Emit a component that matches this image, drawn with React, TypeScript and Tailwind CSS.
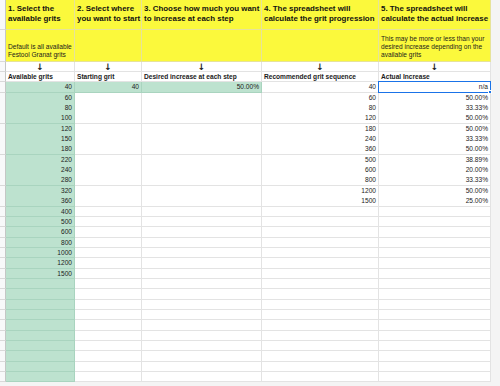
import React from "react";

const COLS = "grid grid-cols-[6px_69px_67px_120px_117px_112px_9px]";

const GRITS = [40, 60, 80, 100, 120, 150, 180, 220, 240, 280, 320, 360, 400, 500, 600, 800, 1000, 1200, 1500];
const SEQUENCE = [40, 60, 80, 120, 180, 240, 360, 500, 600, 800, 1200, 1500];
const ACTUAL = ["n/a", "50.00%", "33.33%", "50.00%", "50.00%", "33.33%", "50.00%", "38.89%", "20.00%", "33.33%", "50.00%", "25.00%"];
const DATA_ROWS = 29;

// sheet rows are ~10.35px; snap each one to whole pixels so gridlines stay crisp
const rowClass = (r: number) => {
  const h = Math.round(82.3 + (r + 1) * 10.35) - Math.round(82.3 + r * 10.35);
  return h > 10 ? "h-[11px]" : "h-[10px]";
};

function Strip() {
  return <div className="border-r border-b border-r-[#c4c7c5] border-b-[#d9d9d9] bg-[#f8f9fa]" />;
}

function Edge() {
  return <div className="bg-[#f4f4f4]" />;
}

function Cell({
  children,
  green,
  align = "left",
  className = "",
}: {
  children?: React.ReactNode;
  green?: boolean;
  align?: "left" | "right" | "center";
  className?: string;
}) {
  return (
    <div
      className={[
        "relative overflow-hidden whitespace-nowrap border-r border-b px-[2px] text-[6.6px] leading-[10px] text-[#1b1b1b]",
        green ? "border-[#a9d4bf] bg-[#bde2cf]" : "border-[#e3e3e3] bg-white",
        align === "right" ? "text-right" : align === "center" ? "text-center" : "text-left",
        className,
      ].join(" ")}
    >
      {children}
    </div>
  );
}

const TITLES: [string, string][] = [
  ["1. Select the", "available grits"],
  ["2. Select where", "you want to start"],
  ["3. Choose how much you want", "to increase at each step"],
  ["4. The spreadsheet will", "calculate the grit progression"],
  ["5. The spreadsheet will", "calculate the actual increase"],
];

const LABELS = [
  "Available grits",
  "Starting grit",
  "Desired increase at each step",
  "Recommended grit sequence",
  "Actual Increase",
];

export default function App() {
  return (
    <div className="h-[386px] w-[500px] overflow-hidden bg-[#f4f4f4] font-['Liberation_Sans',Arial,sans-serif]">
      {/* Title row */}
      <div className={`${COLS} h-[30px]`}>
        <Strip />
        {TITLES.map(([a, b]) => (
          <div
            key={a}
            className="overflow-hidden whitespace-nowrap border-r border-b border-[#e6e39a] bg-[#fbf93c] px-[2px] pt-[3.6px] text-[7.9px] font-bold leading-[10.4px] text-[#111]"
          >
            {a}
            <br />
            {b}
          </div>
        ))}
        <Edge />
      </div>

      {/* Notes row */}
      <div className={`${COLS} h-[32px]`}>
        <Strip />
        {[0, 1, 2, 3, 4].map((i) => (
          <div
            key={i}
            className="flex flex-col justify-end overflow-hidden whitespace-nowrap border-r border-b border-[#e6e39a] bg-[#fbf93c] px-[2px] pb-[1.6px] text-[6.6px] leading-[8.2px] text-[#1b1b1b]"
          >
            {i === 0 && (
              <>
                <span>Default is all available</span>
                <span>Festool Granat grits</span>
              </>
            )}
            {i === 4 && (
              <>
                <span>This may be more or less than your</span>
                <span>desired increase depending on the</span>
                <span>available grits</span>
              </>
            )}
          </div>
        ))}
        <Edge />
      </div>

      {/* Arrow row */}
      <div className={`${COLS} h-[10px]`}>
        <Strip />
        {[0, 1, 2, 3, 4].map((i) => (
          <Cell key={i} align="center" className="font-['DejaVu_Sans',sans-serif] text-[9px] font-bold leading-[10px] text-[#222]">
            ↓
          </Cell>
        ))}
        <Edge />
      </div>

      {/* Column labels */}
      <div className={`${COLS} h-[10px]`}>
        <Strip />
        {LABELS.map((l) => (
          <Cell key={l} className="font-bold">
            {l}
          </Cell>
        ))}
        <Edge />
      </div>

      {/* Data */}
      {Array.from({ length: DATA_ROWS }).map((_, r) => (
        <div key={r} className={`${COLS} ${rowClass(r)}`}>
          <Strip />
          <Cell green align="right">
            {GRITS[r]}
          </Cell>
          <Cell green={r === 0} align="right">
            {r === 0 ? 40 : null}
          </Cell>
          <Cell green={r === 0} align="right">
            {r === 0 ? "50.00%" : null}
          </Cell>
          <Cell align="right">{SEQUENCE[r]}</Cell>
          <Cell align="right" className="overflow-visible">
            {ACTUAL[r]}
            {r === 0 && (
              <>
                <div className="pointer-events-none absolute -left-px -top-px -right-px -bottom-px border-[1.5px] border-[#1a73e8]" />
                <div className="absolute -bottom-[2px] -right-[2px] h-[4px] w-[4px] border border-white bg-[#1a73e8]" />
              </>
            )}
          </Cell>
          <Edge />
        </div>
      ))}
    </div>
  );
}
